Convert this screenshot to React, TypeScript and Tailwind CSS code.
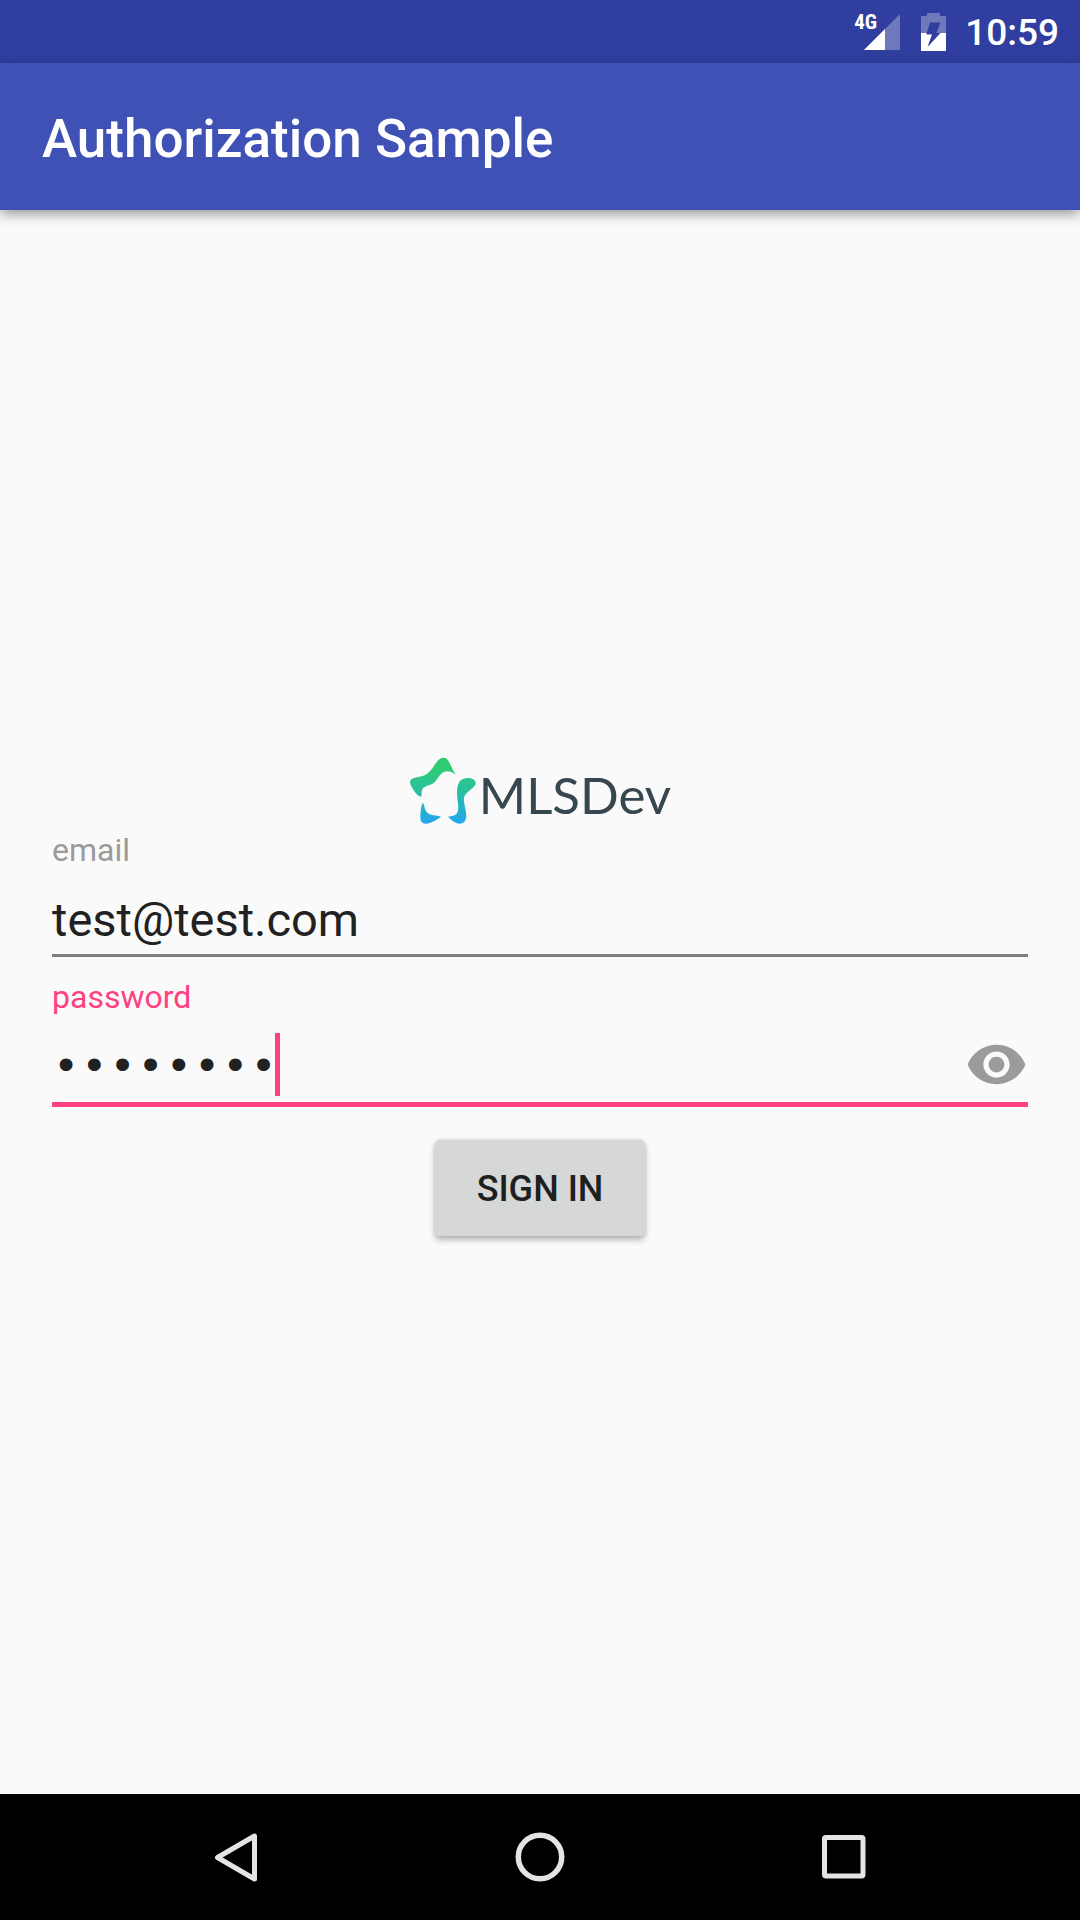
import { useState } from "react";
import { MdVisibility } from "react-icons/md";

function StatusBar() {
  return (
    <div className="flex h-[63px] shrink-0 items-center justify-end bg-[#303f9f] pr-[21px] text-white">
      <div className="relative mr-[21px] h-[38px] w-[46px]">
        <svg viewBox="0 0 46 38" className="h-full w-full" aria-hidden="true">
          <path d="M46 1V37H10Z" fill="#fff" fillOpacity=".3" />
          <path d="M31 16V37H10Z" fill="#fff" />
        </svg>
        <span className="absolute left-0 top-0 text-[21px] leading-[18px] font-bold font-stretch-condensed">4G</span>
      </div>
      <svg viewBox="0 0 25 38" className="mr-[19px] h-[38px] w-[25px]" aria-hidden="true">
        <path d="M6 0H19V3H25V20H15.500L19.500 9.500H9L5.500 21V20H0V3H6Z" fill="#fff" fillOpacity=".3" />
        <path d="M0 20H5.500V21.500H11L6.500 34L19.500 20H25V38H0Z" fill="#fff" />
      </svg>
      <time className="pt-[3px] text-[37px] leading-[44px] font-medium">10:59</time>
    </div>
  );
}

function Logo() {
  return (
    <div className="flex h-[68px] items-start justify-center text-[#37474f]">
      <svg viewBox="24 38 204 204" className="h-[68px] w-[68px] shrink-0" aria-hidden="true">
        <defs>
          <linearGradient id="star" gradientUnits="userSpaceOnUse" x1="0" y1="40" x2="0" y2="240">
            <stop offset="0" stopColor="#2ecc71" />
            <stop offset=".15" stopColor="#2ecc71" />
            <stop offset=".45" stopColor="#2ac29b" />
            <stop offset=".7" stopColor="#28b4bf" />
            <stop offset="1" stopColor="#24a5f5" />
          </linearGradient>
        </defs>
        <g fill="url(#star)">
          <path d="M165 91C150 80 138 78 127 84C114 91 110 107 98 116C86 124 70 124 64 135C60 143 63 150 61 155C57 162 43 147 36 135C29 124 24 113 29 107C36 98 58 101 76 90C96 77 103 52 117 43C128 37 137 41 142 49C149 60 152 73 165 91Z" />
          <path d="M197 101C214 99 226 108 224 119C221 130 199 140 191 154C184 168 196 194 196 215C195 230 189 237 176 238C163 238 149 225 141 217C152 214 163 215 169 205C176 192 168 169 168 147C168 119 174 104 197 101Z" />
          <path d="M65 175C72 182 69 195 79 205C90 215 106 211 120 217C111 224 92 236 77 238C64 239 58 232 58 219C58 203 59 188 65 175Z" />
        </g>
      </svg>
      <span className="ml-[2px] font-[Lato] text-[51px] leading-[76px]">MLSDev</span>
    </div>
  );
}

function SignInForm() {
  const [email, setEmail] = useState("test@test.com");
  const [password, setPassword] = useState("password");
  const [visible, setVisible] = useState(false);

  return (
    <form className="flex w-full flex-col px-[52px] pb-3" onSubmit={(e) => e.preventDefault()}>
      <Logo />
      <label htmlFor="email" className="mt-[7px] text-[32px] leading-9 text-[#9b9b9b]">
        email
      </label>
      <div className="mt-6 border-b-[3px] border-[#7e7e7e] pb-[7px]">
        <input
          id="email"
          type="email"
          value={email}
          onChange={(e) => setEmail(e.target.value)}
          className="block h-[55px] w-full bg-transparent text-[47px] leading-[55px] text-[#212121] outline-none"
        />
      </div>
      <label htmlFor="password" className="mt-[22px] text-[32px] leading-9 text-[#ff4081]">
        password
      </label>
      <div className="mt-[18px] flex border-b-[5px] border-[#ff4081] pb-[6px]">
        <div className="relative min-w-0 flex-1">
          <input
            id="password"
            type={visible ? "text" : "password"}
            value={password}
            onChange={(e) => setPassword(e.target.value)}
            className="block h-[63px] w-full bg-transparent pt-2 font-['Liberation_Mono',monospace] text-[47px] text-[#212121] caret-transparent outline-none"
          />
          <span className="pointer-events-none absolute top-0 left-[223px] h-[63px] w-[5px] bg-[#ff4081]" />
        </div>
        <button
          type="button"
          aria-label="Show password"
          aria-pressed={visible}
          onClick={() => setVisible(!visible)}
          className="shrink-0 text-[#9b9b9b]"
        >
          <MdVisibility className="size-[63px]" />
        </button>
      </div>
      <button
        type="submit"
        className="mt-[33px] h-24 self-center rounded-[5px] bg-[#d6d8d7] px-[42px] pt-[2px] text-[36px] leading-[44px] font-medium text-[#1e1f1f] shadow-[0_4px_6px_rgba(0,0,0,0.26),0_0_4px_rgba(0,0,0,0.12)]"
      >
        SIGN IN
      </button>
    </form>
  );
}

function NavigationBar() {
  const icon = "size-[52px] fill-none stroke-[#e4e4e4]";
  return (
    <nav className="flex h-[126px] shrink-0 items-center bg-black px-[84px]">
      <button type="button" aria-label="Back" className="flex flex-1 justify-center">
        <svg viewBox="0 0 52 52" className={icon} strokeWidth="5" strokeLinejoin="round">
          <path d="M7.500 26.500L44.500 5V48Z" />
        </svg>
      </button>
      <button type="button" aria-label="Home" className="flex flex-1 justify-center">
        <svg viewBox="0 0 52 52" className={icon} strokeWidth="5.500">
          <circle cx="26" cy="26" r="21.700" />
        </svg>
      </button>
      <button type="button" aria-label="Recent apps" className="flex flex-1 justify-center">
        <svg viewBox="0 0 52 52" className={icon} strokeWidth="5">
          <rect x="6.500" y="6.500" width="38.500" height="38.500" rx="1.500" />
        </svg>
      </button>
    </nav>
  );
}

export default function App() {
  return (
    <div className="flex min-h-screen flex-col bg-[#fafafa] font-[Roboto,sans-serif]">
      <StatusBar />
      <header className="z-10 flex h-[147px] shrink-0 items-center bg-[#3f51b5] px-[42px] pt-1 shadow-[0_4px_12px_rgba(0,0,0,0.4)]">
        <h1 className="text-[53px] leading-[62px] font-medium text-white">Authorization Sample</h1>
      </header>
      <main className="flex flex-1 items-center">
        <SignInForm />
      </main>
      <NavigationBar />
    </div>
  );
}
